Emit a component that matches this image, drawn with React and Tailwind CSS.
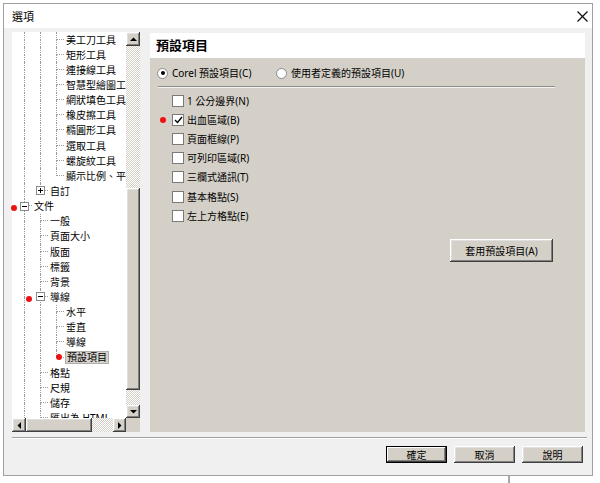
import React from 'react';

const raised =
  'bg-[#d4d0c8] shadow-[inset_-1px_-1px_#404040,inset_1px_1px_#ffffff,inset_-2px_-2px_#808080,inset_2px_2px_#dfdfdf]';
const dither =
  'bg-[image:repeating-conic-gradient(#d4d0c8_0_25%,#ffffff_0_50%)] bg-[length:2px_2px]';

const rows = [
  ['美工刀工具', ['I', 'I', 'T']],
  ['矩形工具', ['I', 'I', 'T']],
  ['連接線工具', ['I', 'I', 'T']],
  ['智慧型繪圖工具', ['I', 'I', 'T']],
  ['網狀填色工具', ['I', 'I', 'T']],
  ['橡皮擦工具', ['I', 'I', 'T']],
  ['橢圓形工具', ['I', 'I', 'T']],
  ['選取工具', ['I', 'I', 'T']],
  ['螺旋紋工具', ['I', 'I', 'T']],
  ['顯示比例、平移工具', ['I', 'I', 'L']],
  ['自訂', ['I', 'L+']],
  ['文件', ['T-']],
  ['一般', ['I', 'T']],
  ['頁面大小', ['I', 'T']],
  ['版面', ['I', 'T']],
  ['標籤', ['I', 'T']],
  ['背景', ['I', 'T']],
  ['導線', ['I', 'T-']],
  ['水平', ['I', 'I', 'T']],
  ['垂直', ['I', 'I', 'T']],
  ['導線', ['I', 'I', 'T']],
  ['預設項目', ['I', 'I', 'L'], true],
  ['格點', ['I', 'T']],
  ['尺規', ['I', 'T']],
  ['儲存', ['I', 'T']],
  ['匯出為 HTML', ['I', 'T']],
];

function Cell({ type }) {
  const base = type[0];
  const box = type[1];
  return (
    <div className="relative w-[16px] h-full shrink-0 pl-[8px] flex flex-col">
      <div
        className={
          base === 'I'
            ? 'h-1/2 border-l border-dotted border-[#9a9a9a]'
            : 'h-1/2 border-l border-b border-dotted border-[#9a9a9a]'
        }
      />
      <div className={base === 'L' ? 'h-1/2' : 'h-1/2 border-l border-dotted border-[#9a9a9a]'} />
      {box && (
        <div className="absolute left-[4px] top-[3px] w-[9px] h-[9px] border border-[#8a8a8a] bg-white flex items-center justify-center">
          <svg width="7" height="7" viewBox="0 0 7 7" shapeRendering="crispEdges">
            <line x1="1" y1="3.5" x2="6" y2="3.5" stroke="#000" strokeWidth="1" />
            {box === '+' && <line x1="3.5" y1="1" x2="3.5" y2="6" stroke="#000" strokeWidth="1" />}
          </svg>
        </div>
      )}
    </div>
  );
}

function Arrow({ dir }) {
  const pts = {
    up: '0,4 7,4 3.5,0.5',
    down: '0,0 7,0 3.5,3.5',
    left: '4,0 4,7 0.5,3.5',
    right: '0,0 0,7 3.5,3.5',
  }[dir];
  const vert = dir === 'up' || dir === 'down';
  return (
    <svg width={vert ? 7 : 4} height={vert ? 4 : 7} viewBox={vert ? '0 0 7 4' : '0 0 4 7'}>
      <polygon points={pts} fill="#000" />
    </svg>
  );
}

function Radio({ on }) {
  return (
    <div className="w-[11px] h-[11px] rounded-full bg-white border border-[#8a8a8a] flex items-center justify-center shrink-0">
      {on && <div className="w-[4px] h-[4px] rounded-full bg-black" />}
    </div>
  );
}

function Check({ on, label }) {
  return (
    <div className="flex items-center h-[19.2px] pl-[22px]">
      <div className="w-[12px] h-[12px] bg-white border border-[#7a7a7a] flex items-center justify-center shrink-0">
        {on && (
          <svg width="9" height="8" viewBox="0 0 9 8">
            <polyline points="1,4 3.5,6.5 8,1" fill="none" stroke="#000" strokeWidth="1.4" />
          </svg>
        )}
      </div>
      <span className="ml-[3px] text-[10px] leading-none whitespace-nowrap">{label}</span>
    </div>
  );
}

function Btn({ label, def }) {
  return (
    <div
      className={
        def
          ? 'w-[61px] h-[17px] border border-black flex items-center justify-center bg-[#d4d0c8] shadow-[inset_-1px_-1px_#404040,inset_1px_1px_#ffffff,inset_-2px_-2px_#808080]'
          : 'w-[61px] h-[17px] flex items-center justify-center ' + raised
      }
    >
      <span className="text-[10px] leading-none">{label}</span>
    </div>
  );
}

export default function App() {
  return (
    <div className="relative w-[600px] h-[483px] bg-white overflow-hidden text-black font-['Noto_Sans','Noto_Sans_CJK_TC',sans-serif]">
      <div className="ml-[3px] mt-[3px] w-[590px] h-[473px] border border-[#a0a0a0] bg-[#f0f0f0] flex flex-col">
        {/* title bar */}
        <div className="h-[24px] bg-white flex items-center justify-between pl-[8px] pr-[4px] shrink-0">
          <span className="text-[11px] leading-none">選項</span>
          <svg width="11" height="11" viewBox="0 0 11 11">
            <line x1="0.5" y1="0.5" x2="10.5" y2="10.5" stroke="#111" strokeWidth="1.2" />
            <line x1="10.5" y1="0.5" x2="0.5" y2="10.5" stroke="#111" strokeWidth="1.2" />
          </svg>
        </div>

        {/* body */}
        <div className="flex pt-[4px] pl-[8px] shrink-0">
          {/* tree panel */}
          <div className="w-[128px] h-[400px] flex flex-col shrink-0">
            <div className="flex h-[386px]">
              <div className="w-[114px] h-full bg-white overflow-hidden pl-[4px]">
                {rows.map(([t, cells, sel], i) => (
                  <div key={i} className="flex items-center h-[15.15px]">
                    {cells.map((c, j) => (
                      <Cell key={j} type={c} />
                    ))}
                    <span
                      className={
                        sel
                          ? 'ml-[1px] px-[1px] bg-[#d6d3ce] border border-[#b0aea8] text-[10px] leading-[11px] whitespace-nowrap'
                          : 'ml-[2px] text-[10px] leading-none whitespace-nowrap'
                      }
                    >
                      {t}
                    </span>
                  </div>
                ))}
              </div>
              <div className="w-[14px] h-full flex flex-col">
                <div className={'h-[14px] flex items-center justify-center ' + raised}>
                  <Arrow dir="up" />
                </div>
                <div className={'h-[142px] ' + dither} />
                <div className={'h-[202px] ' + raised} />
                <div className={'h-[15px] ' + dither} />
                <div className={'h-[13px] flex items-center justify-center ' + raised}>
                  <Arrow dir="down" />
                </div>
              </div>
            </div>
            <div className="flex h-[14px]">
              <div className={'w-[14px] h-full flex items-center justify-center ' + raised}>
                <Arrow dir="left" />
              </div>
              <div className={'w-[66px] h-full ' + raised} />
              <div className={'w-[21px] h-full ' + dither} />
              <div className={'w-[13px] h-full flex items-center justify-center ' + raised}>
                <Arrow dir="right" />
              </div>
              <div className="w-[14px] h-full bg-[#d4d0c8]" />
            </div>
          </div>

          {/* right panel */}
          <div className="ml-[10px] mt-[1px] w-[435px] h-[399px] flex flex-col shrink-0">
            <div className="h-[25px] bg-white flex items-center pl-[6px] shrink-0">
              <span className="text-[13px] font-bold leading-none">預設項目</span>
            </div>
            <div className="flex-1 bg-[#d4d0c8] flex flex-col">
              <div className="flex items-center h-[14px] mt-[8px] pl-[7px]">
                <div className="flex items-center w-[119px]">
                  <Radio on />
                  <span className="ml-[4px] text-[10px] leading-none whitespace-nowrap">Corel 預設項目(C)</span>
                </div>
                <Radio />
                <span className="ml-[4px] text-[10px] leading-none whitespace-nowrap">使用者定義的預設項目(U)</span>
              </div>
              <div className="ml-[8px] w-[397px] mt-[6px] h-px bg-[#8c8c8c]" />
              <div className="ml-[8px] w-[397px] h-px bg-[#f4f3f0]" />
              <div className="mt-[3px] flex flex-col">
                <Check label="1 公分邊界(N)" />
                <Check on label="出血區域(B)" />
                <Check label="頁面框線(P)" />
                <Check label="可列印區域(R)" />
                <Check label="三欄式通訊(T)" />
                <Check label="基本格點(S)" />
                <Check label="左上方格點(E)" />
              </div>
              <div
                className={
                  'mt-[14px] self-end mr-[32px] w-[103px] h-[23px] flex items-center justify-center ' + raised
                }
              >
                <span className="text-[10px] leading-none">套用預設項目(A)</span>
              </div>
            </div>
          </div>
        </div>

        {/* separator */}
        <div className="ml-[8px] w-[575px] mt-[5px] h-px bg-[#a0a0a0] shrink-0" />
        <div className="ml-[8px] w-[575px] h-px bg-white shrink-0" />

        {/* buttons */}
        <div className="flex justify-end gap-[7px] pr-[9px] mt-[7px] shrink-0">
          <Btn label="確定" def />
          <Btn label="取消" />
          <Btn label="說明" />
        </div>
      </div>
      <div className="ml-[508px] w-[2px] h-[8px] bg-[#a8a8a8]" />

      {/* red annotation dots */}
      <div className="absolute left-[11px] top-[205px] w-[6px] h-[6px] rounded-full bg-[#ee1111]" />
      <div className="absolute left-[26px] top-[296px] w-[6px] h-[6px] rounded-full bg-[#ee1111]" />
      <div className="absolute left-[56px] top-[354px] w-[6px] h-[6px] rounded-full bg-[#ee1111]" />
      <div className="absolute left-[160px] top-[117px] w-[6px] h-[6px] rounded-full bg-[#ee1111]" />
    </div>
  );
}
